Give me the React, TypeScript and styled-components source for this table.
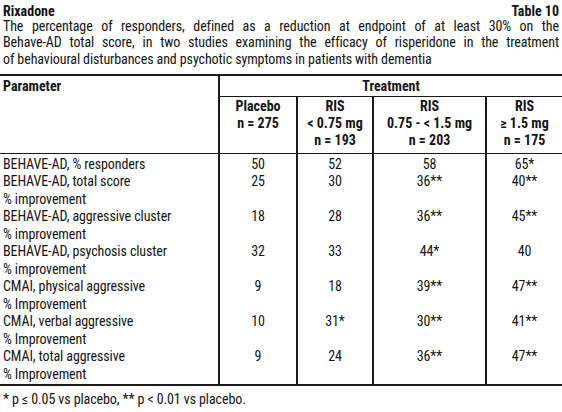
import React from "react";
import styled, { createGlobalStyle } from "styled-components";

const Global = createGlobalStyle`
  html, body { margin: 0; padding: 0; background: #ffffff; }
  body {
    font-family: "Roboto Condensed", "Liberation Sans", Arial, sans-serif;
    color: #141414;
  }
`;

const Page = styled.div`
  width: 562px;
  font-size: 14px;
  letter-spacing: -0.1px;
`;

const TitleBar = styled.div`
  display: flex;
  justify-content: space-between;
  align-items: baseline;
  padding: 4px 3px 0 3px;
  line-height: 14px;
  font-weight: 700;
  letter-spacing: 0;
`;

const Caption = styled.div`
  padding: 0 3px;
  line-height: 16.3px;
  white-space: nowrap;
`;

const CaptionLine = styled.span<{ $justify?: boolean }>`
  display: block;
  text-align: ${(p) => (p.$justify ? "justify" : "left")};
  text-align-last: ${(p) => (p.$justify ? "justify" : "left")};
  white-space: normal;
`;

const Table = styled.table`
  width: 562px;
  margin-top: 7px;
  border-collapse: collapse;
  table-layout: fixed;
  border-top: 2px solid #1a1a1a;
  border-bottom: 2px solid #1a1a1a;
`;

const HeadCell = styled.th<{ $align?: "left" | "center" }>`
  font-weight: 700;
  text-align: ${(p) => p.$align ?? "center"};
  vertical-align: top;
  white-space: nowrap;
  line-height: 16px;
  padding: 2.5px 3px 1.5px 3px;
  border-left: 2px solid #1a1a1a;
  border-bottom: 1px solid #1a1a1a;
  letter-spacing: 0;
  &:first-child { border-left: none; }
`;

const SubHeadCell = styled(HeadCell)`
  line-height: 17px;
  padding: 1.5px 3px 4px 3px;
  &:first-child { border-left: 2px solid #1a1a1a; }
`;

const Cell = styled.td<{ $align?: "left" | "center"; $first?: boolean; $last?: boolean }>`
  text-align: ${(p) => p.$align ?? "center"};
  vertical-align: top;
  white-space: nowrap;
  line-height: 17.5px;
  padding: ${(p) => (p.$first ? "1.5px" : "0")} 3px ${(p) => (p.$last ? "1px" : "0")} 3px;
  border-left: 2px solid #1a1a1a;
  &:first-child { border-left: none; }
`;

const Footnote = styled.div`
  padding: 5px 3px 0 3px;
  line-height: 16px;
`;

type Row = { name: string; sub?: string; values: string[] };

const rows: Row[] = [
  { name: "BEHAVE-AD, % responders", values: ["50", "52", "58", "65*"] },
  { name: "BEHAVE-AD, total score", sub: "% improvement", values: ["25", "30", "36**", "40**"] },
  { name: "BEHAVE-AD, aggressive cluster", sub: "% improvement", values: ["18", "28", "36**", "45**"] },
  { name: "BEHAVE-AD, psychosis cluster", sub: "% improvement", values: ["32", "33", "44*", "40"] },
  { name: "CMAI, physical aggressive", sub: "% Improvement", values: ["9", "18", "39**", "47**"] },
  { name: "CMAI, verbal aggressive", sub: "% Improvement", values: ["10", "31*", "30**", "41**"] },
  { name: "CMAI, total aggressive", sub: "% Improvement", values: ["9", "24", "36**", "47**"] },
];

export default function App() {
  return (
    <Page>
      <Global />
      <TitleBar>
        <span>Rixadone</span>
        <span>Table 10</span>
      </TitleBar>
      <Caption>
        <CaptionLine $justify>
          The percentage of responders, defined as a reduction at endpoint of at least 30% on the
        </CaptionLine>
        <CaptionLine $justify>
          Behave-AD total score, in two studies examining the efficacy of risperidone in the treatment
        </CaptionLine>
        <CaptionLine>
          of behavioural disturbances and psychotic symptoms in patients with dementia
        </CaptionLine>
      </Caption>
      <Table>
        <colgroup>
          <col style={{ width: 219 }} />
          <col style={{ width: 78 }} />
          <col style={{ width: 76 }} />
          <col style={{ width: 113 }} />
          <col style={{ width: 76 }} />
        </colgroup>
        <thead>
          <tr>
            <HeadCell $align="left" rowSpan={2}>Parameter</HeadCell>
            <HeadCell colSpan={4}>Treatment</HeadCell>
          </tr>
          <tr>
            <SubHeadCell>Placebo<br />n = 275</SubHeadCell>
            <SubHeadCell>RIS<br />&lt; 0.75 mg<br />n = 193</SubHeadCell>
            <SubHeadCell>RIS<br />0.75 - &lt; 1.5 mg<br />n = 203</SubHeadCell>
            <SubHeadCell>RIS<br />≥ 1.5 mg<br />n = 175</SubHeadCell>
          </tr>
        </thead>
        <tbody>
          {rows.map((r, i) => {
            const first = i === 0;
            const last = i === rows.length - 1;
            return (
              <tr key={r.name}>
                <Cell $align="left" $first={first} $last={last}>
                  {r.name}
                  {r.sub && (<><br />{r.sub}</>)}
                </Cell>
                {r.values.map((v, j) => (
                  <Cell key={j} $first={first} $last={last}>{v}</Cell>
                ))}
              </tr>
            );
          })}
        </tbody>
      </Table>
      <Footnote>* p ≤ 0.05 vs placebo, ** p &lt; 0.01 vs placebo.</Footnote>
    </Page>
  );
}
